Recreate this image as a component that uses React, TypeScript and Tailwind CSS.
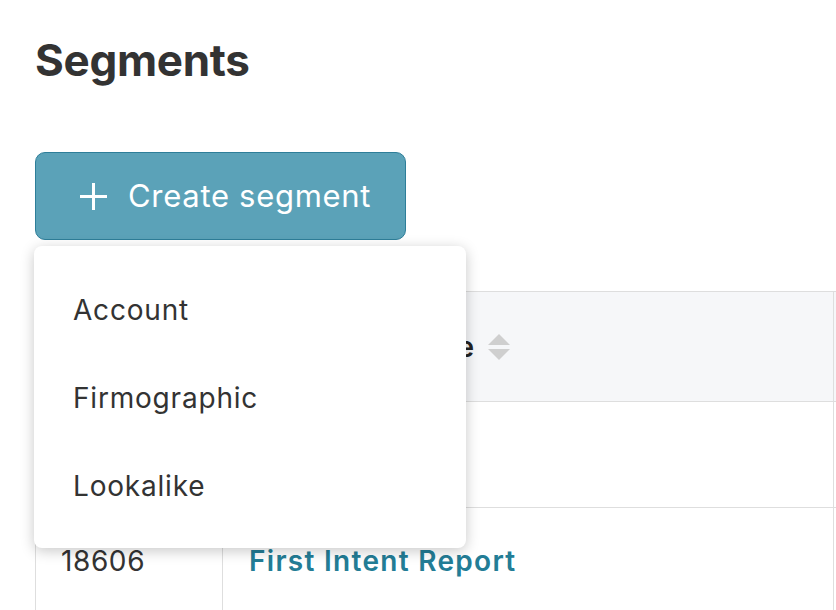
function PlusIcon() {
  return (
    <svg width="27" height="27" viewBox="0 0 27 27" className="shrink-0">
      <path d="M13.5 0 V27 M0 13.5 H27" stroke="white" strokeWidth="3" />
    </svg>
  );
}

function SortIcon() {
  return (
    <svg width="22" height="26" viewBox="0 0 22 26" className="shrink-0">
      <path d="M11 0 L22 11 L0 11 Z" fill="#cfcfcf" />
      <path d="M0 15 L22 15 L11 26 Z" fill="#cfcfcf" />
    </svg>
  );
}

export default function App() {
  const menuItems = ['Account', 'Firmographic', 'Lookalike'];
  const rows = [
    { id: '18612', name: 'Q3 Pipeline' },
    { id: '18606', name: 'First Intent Report' },
  ];

  return (
    <div
      className="relative w-[836px] h-[610px] overflow-hidden bg-white text-[#333]"
      style={{ fontFamily: 'Inter, "Noto Sans", sans-serif' }}
    >
      <div className="pl-[35px] pt-[38px]">
        <h1 className="text-[44px] leading-none font-bold text-[#333] tracking-[-0.3px]">Segments</h1>

        <button className="mt-[70px] flex items-center h-[88px] w-[371px] pl-[44px] gap-[21px] rounded-[10px] border border-[#2e7e99] bg-[#5ba2b8] text-white text-[31px] tracking-[0.7px]">
          <PlusIcon />
          <span>Create segment</span>
        </button>

        <div className="mt-[51px] w-[900px] border-l border-t border-[#dedede]">
          <div className="flex h-[110px] bg-[#f6f7f9] border-b border-[#dedede]">
            <div className="w-[187px] flex items-center pl-[25px] border-r border-[#dedede] text-[28px] font-semibold text-[#222]">
              ID
            </div>
            <div className="w-[611px] flex items-center pl-[26px] gap-[12px] border-r border-[#dedede] text-[28px] font-semibold text-[#222] tracking-[2px]">
              <span>Segment name</span>
              <SortIcon />
            </div>
            <div className="flex-1" />
          </div>
          {rows.map((row) => (
            <div key={row.id} className="flex h-[106px] border-b border-[#dedede]">
              <div className="w-[187px] flex items-center pl-[25px] border-r border-[#dedede] text-[28px] text-[#333] tracking-[0.6px]">
                {row.id}
              </div>
              <div className="w-[611px] flex items-center pl-[26px] border-r border-[#dedede] text-[28px] font-semibold text-[#237d96] tracking-[1.3px]">
                {row.name}
              </div>
              <div className="flex-1" />
            </div>
          ))}
        </div>
      </div>

      <div className="absolute left-[34px] top-[246px] w-[432px] h-[302px] rounded-[8px] bg-white shadow-[0_3px_14px_rgba(0,0,0,0.22)] py-[20px]">
        {menuItems.map((item) => (
          <div key={item} className="h-[88px] flex items-center pl-[39px] text-[28px] text-[#333] tracking-[0.8px]">
            {item}
          </div>
        ))}
      </div>
    </div>
  );
}
